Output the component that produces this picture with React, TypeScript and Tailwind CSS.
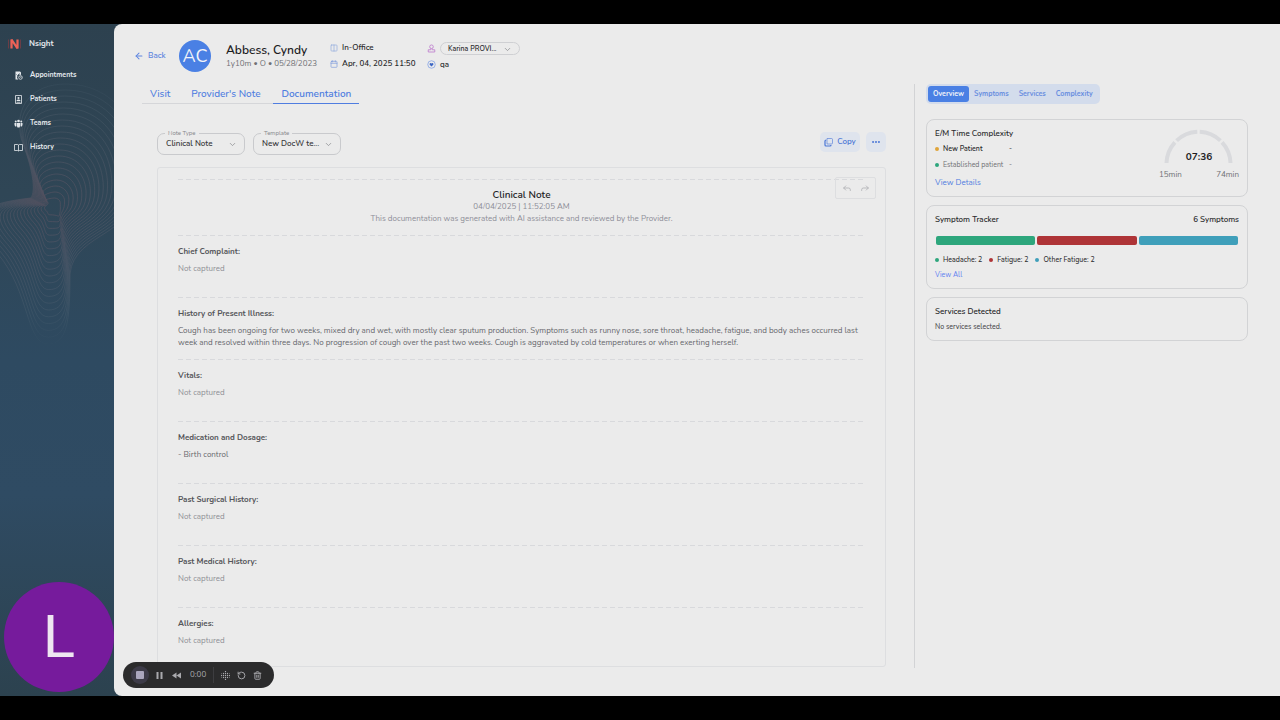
import { useState } from "react"
import { ArrowLeft, Calendar, ChevronDown, Columns2, Ellipsis, Forward, Reply, RotateCcw, Trash2 } from "lucide-react"

const sections = [
  { title: "Chief Complaint:", body: "Not captured" },
  {
    title: "History of Present Illness:",
    body: "Cough has been ongoing for two weeks, mixed dry and wet, with mostly clear sputum production. Symptoms such as runny nose, sore throat, headache, fatigue, and body aches occurred last week and resolved within three days. No progression of cough over the past two weeks. Cough is aggravated by cold temperatures or when exerting herself.",
  },
  { title: "Vitals:", body: "Not captured" },
  { title: "Medication and Dosage:", body: "- Birth control" },
  { title: "Past Surgical History:", body: "Not captured" },
  { title: "Past Medical History:", body: "Not captured" },
  { title: "Allergies:", body: "Not captured" },
]

const symptoms = [
  { label: "Headache: 2", color: "bg-[#2da67c]" },
  { label: "Fatigue: 2", color: "bg-[#ae3437]" },
  { label: "Other Fatigue: 2", color: "bg-[#3f9fba]" },
]

const card = "border border-[#d2d3d5] rounded-lg px-2 pt-2 pb-[7px]"

// one closed contour of the sidebar pattern, t goes from 0 (center) to 1
const contour = (t: number) => {
  const p = (x: number, y: number) => `${x.toFixed(1)} ${y.toFixed(1)}`
  return [
    `M${p(54 + 12 * t, 180 - 120 * t)}`,
    `C${p(54 + 60 * t, 180 - 120 * t)} ${p(56 + 86 * t, 180 - 80 * t)} ${p(56 + 86 * t, 180 - 30 * t)}`,
    `C${p(56 + 86 * t, 184 + 30 * t)} ${p(60 + 14 * t, 184 + 22 * t)} ${p(59 + 11 * t, 188 + 62 * t)}`,
    `C${p(58 + 12 * t, 188 + 110 * t)} ${p(58 + 9 * t, 184 + 136 * t)} ${p(50 - 2 * t, 184 + 136 * t)}`,
    `C${p(48 - 22 * t, 184 + 136 * t)} ${p(50 - 20 * t, 184 + 84 * t)} ${p(48 - 50 * t, 184 + 46 * t)}`,
    `C${p(48 - 84 * t, 184 + 8 * t)} ${p(48 - 70 * t, 182 - 2 * t)} ${p(47 - 16 * t, 182 - 8 * t)}`,
    `C${p(50 - 14 * t, 180 - 14 * t)} ${p(49 - 16 * t, 180 - 34 * t)} ${p(47 - 26 * t, 180 - 66 * t)}`,
    `C${p(46 - 32 * t, 180 - 98 * t)} ${p(54 - 22 * t, 180 - 120 * t)} ${p(54 + 12 * t, 180 - 120 * t)}`,
  ].join(" ")
}

function Contours() {
  return (
    <svg className="absolute inset-0 w-full h-[360px] opacity-40" fill="none" aria-hidden="true">
      <defs>
        <radialGradient id="line" gradientUnits="userSpaceOnUse" cx="50" cy="182" r="145">
          <stop offset="0" stopColor="#8c5f6b" />
          <stop offset="0.35" stopColor="#746a78" stopOpacity="0.9" />
          <stop offset="0.75" stopColor="#62727f" stopOpacity="0.7" />
          <stop offset="1" stopColor="#4a6478" stopOpacity="0" />
        </radialGradient>
      </defs>
      {Array.from({ length: 20 }, (_, i) => (
        <path key={i} d={contour((i + 1) / 20)} stroke="url(#line)" strokeWidth="0.8" />
      ))}
    </svg>
  )
}

function AppointmentsIcon() {
  return (
    <svg viewBox="0 0 18 18" className="w-[9px] h-[9px]" fill="#e4e8ec">
      <path d="M3 1h9l2 2v5a5 5 0 0 0-5 9H3z" />
      <path d="m5 7 2 2 4-4" stroke="#2f4555" strokeWidth="1.5" fill="none" />
      <circle cx="13" cy="13" r="3.6" fill="none" stroke="#e4e8ec" strokeWidth="1.6" />
      <path d="M13 11v2h2" stroke="#e4e8ec" fill="none" />
    </svg>
  )
}

function PatientsIcon() {
  return (
    <svg viewBox="0 0 18 18" className="w-[9px] h-[9px]" fill="none" stroke="#e4e8ec" strokeWidth="1.6">
      <path d="M3 1h12v16H3z" />
      <circle cx="9" cy="6" r="2.2" fill="#e4e8ec" stroke="none" />
      <path d="M5 12c0-4 8-4 8 0z" fill="#e4e8ec" stroke="none" />
      <path d="M5 14.5h8" />
    </svg>
  )
}

function TeamsIcon() {
  return (
    <svg viewBox="0 0 18 18" className="w-[9px] h-[9px]" fill="#e4e8ec">
      <circle cx="9" cy="4" r="2.6" />
      <circle cx="3.5" cy="5" r="2" />
      <circle cx="14.5" cy="5" r="2" />
      <path d="M5.7 8h6.6v5.5L11 17H7l-1.3-3.5zM1 8h3.7v7H2.5L1 12zM17 8h-3.7v7h2.2L17 12z" />
    </svg>
  )
}

function HistoryIcon() {
  return (
    <svg viewBox="0 0 18 18" className="w-[9px] h-[9px]" fill="none" stroke="#e4e8ec" strokeWidth="1.6">
      <path d="M1 3h6.5L9 4l1.5-1H17v12h-6.5L9 16l-1.5-1H1zM9 4v12" />
    </svg>
  )
}

const navItems = [
  { label: "Appointments", icon: <AppointmentsIcon /> },
  { label: "Patients", icon: <PatientsIcon /> },
  { label: "Teams", icon: <TeamsIcon /> },
  { label: "History", icon: <HistoryIcon /> },
]

function Sidebar() {
  return (
    <aside className="relative w-[114px] shrink-0 text-[#e4e8ec]">
      <Contours />
      <div className="relative flex items-center gap-2 pl-2 pt-3">
        <svg viewBox="0 0 26 28" className="w-[13px] h-[14px]" aria-hidden="true">
          <path d="M1 5v18M25 5v18" stroke="#6b3d46" strokeWidth="2" />
          <path d="M7 23V5l12 18V5" fill="none" stroke="#ec6257" strokeWidth="4.5" strokeLinejoin="bevel" />
        </svg>
        <span className="text-[8px] leading-4 font-bold">Nsight</span>
      </div>
      <nav className="relative flex flex-col gap-3 pl-[14px] pt-[17px]">
        {navItems.map((n) => (
          <a key={n.label} href="#" className="flex items-center gap-[7px] text-[7px] leading-3 font-bold">
            {n.icon}
            {n.label}
          </a>
        ))}
      </nav>
    </aside>
  )
}

function Header() {
  return (
    <header className="flex items-center pl-5 pt-4">
      <a href="#" className="flex items-center gap-1 w-[45px] text-[8px] font-semibold text-[#5f86e0]">
        <ArrowLeft className="w-[10px] h-[10px]" strokeWidth={2.5} />
        Back
      </a>
      <div className="w-8 h-8 rounded-full bg-[#4a80e4] text-[#f1f3f8] text-[18px] flex items-center justify-center">AC</div>
      <div className="w-[104px] ml-[15px] whitespace-nowrap">
        <h1 className="text-[12px] leading-4 font-semibold text-[#1d1d1f]">Abbess, Cyndy</h1>
        <p className="text-[8px] leading-3 text-[#6f7074]">1y10m • O • 05/28/2023</p>
      </div>
      <div className="w-[97px] flex flex-col gap-1 text-[8px] leading-3 font-semibold text-[#2b2b2e]">
        <span className="flex items-center gap-1">
          <Columns2 className="w-2 h-2 text-[#8fa9de]" />
          In-Office
        </span>
        <span className="flex items-center gap-1 whitespace-nowrap">
          <Calendar className="w-2 h-2 text-[#7d9cdd]" />
          Apr, 04, 2025 11:50
        </span>
      </div>
      <div className="flex flex-col gap-1 text-[8px] leading-3 font-semibold text-[#2b2b2e]">
        <div className="flex items-center gap-1">
          <svg viewBox="0 0 18 18" className="w-[9px] h-[9px]" fill="none" stroke="#c184cf" strokeWidth="1.8" aria-hidden="true">
            <circle cx="9" cy="5.5" r="3.6" />
            <path d="M7.5 9v2.5h-5V16h13v-4.5h-5V9" />
          </svg>
          <div className="relative">
            <select aria-label="Provider" className="appearance-none block w-20 h-[13px] border border-[#cfd0d3] rounded-full bg-transparent pl-[7px] text-[7px] leading-[11px] outline-none">
              <option>Karina PROVI...</option>
            </select>
            <ChevronDown className="absolute right-2 top-[3px] w-[9px] h-[9px] text-[#8b8c90] pointer-events-none" />
          </div>
        </div>
        <span className="flex items-center gap-1">
          <svg viewBox="0 0 18 18" className="w-[9px] h-[9px]" aria-hidden="true">
            <circle cx="9" cy="9" r="7.5" fill="none" stroke="#7d9fe6" strokeWidth="1.5" />
            <path d="M9 13 5.5 9.500a2 2 0 0 1 3.500-2.500 2 2 0 0 1 3.500 2.500z" fill="#3c66c4" />
          </svg>
          qa
        </span>
      </div>
    </header>
  )
}

function FieldSelect({ id, label, value }: { id: string; label: string; value: string }) {
  return (
    <div className="relative">
      <label htmlFor={id} className="absolute left-2 -top-1 px-[3px] bg-[#ebebeb] text-[6px] leading-2 text-[#85868a]">
        {label}
      </label>
      <select id={id} className="appearance-none block w-[88px] h-[22px] border border-[#c9cacd] rounded-[7px] bg-transparent pl-2 text-[8px] font-semibold text-[#3a3a3d] outline-none">
        <option>{value}</option>
      </select>
      <ChevronDown className="absolute right-2 top-[7px] w-[9px] h-[9px] text-[#8b8c90] pointer-events-none" />
    </div>
  )
}

function Dashes() {
  return <div className="h-px bg-[repeating-linear-gradient(90deg,#d8d9dc_0_5px,transparent_5px_8px)]" />
}

function ClinicalNote() {
  return (
    <article className="relative border border-[#dddee0] rounded-[3px] mt-3 px-5 pt-[11px]">
      <Dashes />
      <div className="absolute right-[9px] top-[9px] w-[41px] h-[22px] border border-[#dddee0] rounded-[2px] flex items-center justify-center gap-2 text-[#b0b1b5]">
        <button aria-label="Undo"><Reply className="block w-[10px] h-[10px]" /></button>
        <button aria-label="Redo"><Forward className="block w-[10px] h-[10px]" /></button>
      </div>
      <div className="text-center pt-[9px] pb-[10px] text-[8px] leading-3 text-[#8d8e98]">
        <h2 className="text-[10px] leading-3 font-semibold text-[#222225]">Clinical Note</h2>
        <p>04/04/2025 | 11:52:05 AM</p>
        <p>This documentation was generated with AI assistance and reviewed by the Provider.</p>
      </div>
      {sections.map((s) => (
        <section key={s.title} className="min-h-[62px] last:min-h-[59px]">
          <Dashes />
          <h3 className="pt-2.5 text-[8px] leading-3 font-bold text-[#55565a]">{s.title}</h3>
          <p className={`pt-[5px] text-[8px] leading-3 ${s.body === "Not captured" ? "text-[#8f9096]" : "text-[#66676b]"}`}>{s.body}</p>
        </section>
      ))}
    </article>
  )
}

function Documentation() {
  const [tab, setTab] = useState("Documentation")

  return (
    <div className="flex-1 pl-[43px] pr-7 pb-px">
      <div className="flex -ml-[15px]">
        {["Visit", "Provider's Note", "Documentation"].map((t) => (
          <button
            key={t}
            onClick={() => setTab(t)}
            className={`h-5 px-2 text-[10px] leading-4 text-[#4f7de0] border-b ${t === "Provider's Note" ? "w-[95px]" : ""} ${t === tab ? "font-semibold border-[#4f7de0]" : "font-medium border-[#d5d6d9]"}`}
          >
            {t}
          </button>
        ))}
      </div>
      <div className="flex justify-between h-[23px] mt-7">
        <div className="flex gap-2 items-end">
          <FieldSelect id="note-type" label="Note Type" value="Clinical Note" />
          <FieldSelect id="template" label="Template" value="New DocW te..." />
        </div>
        <div className="flex gap-1.5 items-start text-[8px] font-semibold text-[#4a76d6]">
          <button className="h-5 w-10 rounded-[5px] bg-[#dfe4ed] flex items-center justify-center gap-1">
            <svg viewBox="0 0 18 18" className="w-[9px] h-[9px]" fill="none" stroke="currentColor" aria-hidden="true">
              <path d="M6 1h9a2 2 0 0 1 2 2v7a2 2 0 0 1-2 2H6z" strokeWidth="1.2" />
              <path d="M4.5 4C3 4 2 4.5 2 6v8c0 1.500.5 2 2 2h8c1.500 0 2-1 2-2" strokeWidth="2.4" />
            </svg>
            Copy
          </button>
          <button aria-label="More" className="h-5 w-5 rounded-[5px] bg-[#dfe4ed] flex items-center justify-center">
            <Ellipsis className="w-[10px] h-[10px]" strokeWidth={3} />
          </button>
        </div>
      </div>
      <ClinicalNote />
    </div>
  )
}

function Gauge() {
  return (
    <div className="relative w-20 text-[8px] leading-3 text-[#6f7074]">
      <svg viewBox="0 0 80 38" className="block w-20 h-[38px]" fill="none" stroke="#d9dadd" strokeWidth="4" aria-hidden="true">
        <path d="M7.5 35A32 32 0 0 1 15.9 14.3" />
        <path d="M17.6 12.6A32 32 0 0 1 38.3 3.7" />
        <path d="M40.7 3.7A32 32 0 0 1 61.4 12.6" />
        <path d="M63.1 14.3A32 32 0 0 1 71.5 35" />
      </svg>
      <span className="absolute inset-x-0 top-[23px] text-center text-[10px] leading-3 font-bold text-[#1d1d1f]">07:36</span>
      <div className="flex justify-between pt-[3px]">
        <span>15min</span>
        <span>74min</span>
      </div>
    </div>
  )
}

function Insights() {
  const [tab, setTab] = useState("Overview")

  return (
    <aside className="w-[366px] border-l border-[#d2d3d5] pl-[11px] pr-8 text-[#2b2b2e]">
      <div className="w-fit h-5 flex p-0.5 rounded-[5px] bg-[#d3dcec]">
        {["Overview", "Symptoms", "Services", "Complexity"].map((t) => (
          <button
            key={t}
            onClick={() => setTab(t)}
            className={`px-[5px] rounded-[3px] text-[7px] font-bold ${t === tab ? "bg-[#4a80e4] text-[#f1f3f8]" : "text-[#6a8fe0]"}`}
          >
            {t}
          </button>
        ))}
      </div>
      <div className={`${card} mt-[15px] flex justify-between`}>
        <div className="text-[7px] leading-3">
          <h2 className="text-[8px] leading-3 font-semibold">E/M Time Complexity</h2>
          <p className="flex items-center gap-1 mt-[3px] font-semibold">
            <span className="w-1 h-1 rounded-full bg-[#dfa43a]" />
            <span className="w-[62px]">New Patient</span>
            <span>-</span>
          </p>
          <p className="flex items-center gap-1 mt-1 text-[#6f7074]">
            <span className="w-1 h-1 rounded-full bg-[#2da67c]" />
            <span className="w-[62px]">Established patient</span>
            <span>-</span>
          </p>
          <a href="#" className="block mt-1.5 text-[8px] text-[#4f7de0]">View Details</a>
        </div>
        <Gauge />
      </div>
      <div className={`${card} mt-2`}>
        <div className="flex justify-between text-[8px] leading-3 font-semibold">
          <h2>Symptom Tracker</h2>
          <span>6 Symptoms</span>
        </div>
        <div className="flex gap-0.5 mt-[10px] px-px">
          {symptoms.map((s) => (
            <div key={s.label} className={`flex-1 h-[9px] rounded-[2px] ${s.color}`} />
          ))}
        </div>
        <ul className="flex gap-[7px] mt-[9px] text-[7px] leading-3 font-medium">
          {symptoms.map((s) => (
            <li key={s.label} className="flex items-center gap-1">
              <span className={`w-1 h-1 rounded-full ${s.color}`} />
              {s.label}
            </li>
          ))}
        </ul>
        <a href="#" className="block mt-[3px] text-[7px] leading-3 text-[#5f7ff0]">View All</a>
      </div>
      <div className={`${card} mt-2`}>
        <h2 className="text-[8px] leading-3 font-semibold">Services Detected</h2>
        <p className="mt-[3px] text-[7px] leading-3 font-medium text-[#4a4a4e]">No services selected.</p>
      </div>
    </aside>
  )
}

// [x, y] of the dots, the last four are the faint outer ones
const dots = [[9, 1], [5, 5], [9, 5], [13, 5], [1, 9], [5, 9], [9, 9], [13, 9], [17, 9], [5, 13], [9, 13], [13, 13], [9, 17], [1, 5], [17, 5], [1, 13], [17, 13]]

function Recorder() {
  return (
    <div className="absolute left-[123px] bottom-8 h-[26px] w-[151px] rounded-full bg-[#2b2b2c] text-[#a9a9ad] flex items-center gap-[7px] pl-2 text-[8px]">
      <button aria-label="Stop" className="w-[18px] h-[18px] rounded-full bg-[#3d3b48] flex items-center justify-center">
        <span className="w-2 h-2 rounded-[1px] bg-[#aaa6bd]" />
      </button>
      <button aria-label="Pause">
        <svg viewBox="0 0 14 14" className="w-[7px] h-[7px]" fill="currentColor"><path d="M1 0h4v14H1zM9 0h4v14H9z" /></svg>
      </button>
      <button aria-label="Rewind" className="mx-0.5">
        <svg viewBox="0 0 18 14" className="w-[9px] h-[7px]" fill="currentColor"><path d="M9 1v12L0 7zM18 1v12L9 7z" /></svg>
      </button>
      <span>0:00</span>
      <span className="w-px h-4 bg-[#3d3d40]" />
      <button aria-label="Blur">
        <svg viewBox="0 0 18 18" className="w-[9px] h-[9px]" fill="currentColor">
          {dots.map(([x, y], i) => (
            <circle key={i} cx={x} cy={y} r={i < 13 ? 1.3 : 0.8} />
          ))}
        </svg>
      </button>
      <button aria-label="Restart"><RotateCcw className="w-[9px] h-[9px]" strokeWidth={2.5} /></button>
      <button aria-label="Delete"><Trash2 className="w-[9px] h-[9px]" strokeWidth={2.5} /></button>
    </div>
  )
}

export default function App() {
  return (
    <div className="relative min-h-screen bg-black py-6 flex font-['Nunito','Lato',sans-serif]">
      <div className="flex-1 flex bg-[linear-gradient(180deg,#2d414f_0%,#2f4656_25%,#2e4a61_50%,#2f4b63_70%,#2c424f_100%)]">
        <Sidebar />
        <main className="flex-1 rounded-l-lg bg-[#ebebeb] pb-7">
          <Header />
          <div className="flex mt-3">
            <Documentation />
            <Insights />
          </div>
        </main>
      </div>
      <div className="absolute left-1 bottom-7 w-[110px] h-[110px] rounded-full bg-[#761b9c] text-[#eee6f1] flex items-center justify-center font-['Roboto',sans-serif] text-[60px]">L</div>
      <Recorder />
    </div>
  )
}
